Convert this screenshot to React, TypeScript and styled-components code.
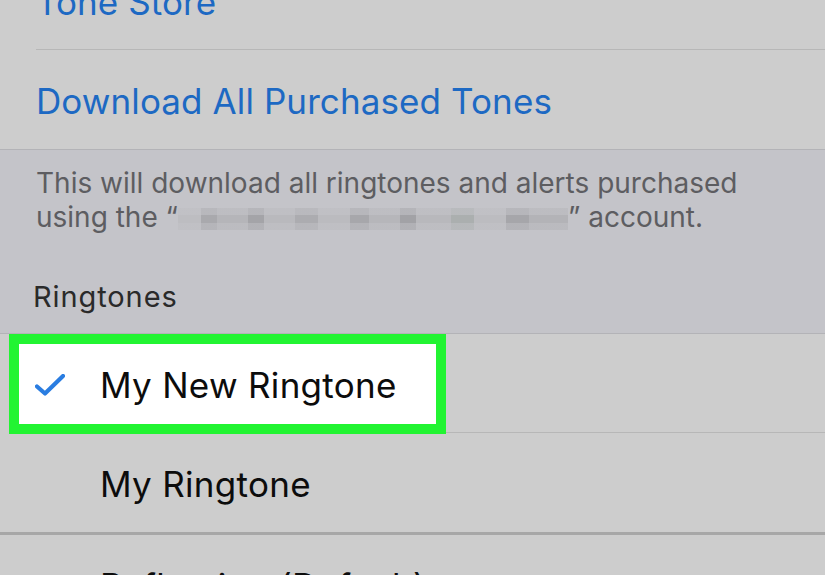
import React from "react";
import styled, { createGlobalStyle } from "styled-components";

const GlobalStyle = createGlobalStyle`
  html, body {
    margin: 0;
    padding: 0;
    background: #cdcdcd;
    overflow: hidden;
  }
  body {
    font-family: Inter, "Noto Sans", "Liberation Sans", sans-serif;
    -webkit-font-smoothing: antialiased;
  }
`;

const Page = styled.div`
  width: 825px;
  height: 575px;
  overflow: hidden;
  background: #cdcdcd;
`;

const List = styled.div`
  display: flex;
  flex-direction: column;
  margin-top: -49px;
`;

const Group = styled.div<{ $heavy?: boolean }>`
  display: flex;
  flex-direction: column;
  background: #cdcdcd;
  border-top: ${(p) => (p.$heavy ? "3px solid #a7a7a7" : "none")};
`;

const Row = styled.div<{ $last?: boolean; $inset?: number }>`
  position: relative;
  height: 99px;
  box-sizing: border-box;
  padding-top: 3px;
  display: flex;
  align-items: center;
  padding-left: ${(p) => p.$inset ?? 36}px;

  &::after {
    content: "";
    display: ${(p) => (p.$last ? "none" : "block")};
    position: absolute;
    left: ${(p) => p.$inset ?? 36}px;
    right: 0;
    bottom: 0;
    height: 1px;
    background: #b7b7b7;
  }
`;

const ActionLabel = styled.span`
  font-size: 35px;
  color: #1d69c3;
  letter-spacing: 0.1px;
`;

const ToneLabel = styled.span`
  position: relative;
  z-index: 2;
  font-size: 35px;
  color: #0c0c0c;
  letter-spacing: 0.3px;
`;

const SectionGap = styled.div`
  background: #c4c4c9;
  border-top: 1px solid #b3b3b7;
  border-bottom: 1px solid #b3b3b7;
  padding: 16px 36px 19px 36px;
  display: flex;
  flex-direction: column;
`;

const Footer = styled.p`
  margin: 0;
  font-size: 28px;
  line-height: 34px;
  color: #5d5d61;
  white-space: nowrap;
`;

const Redacted = styled.span`
  display: inline-block;
  width: 390px;
  height: 22px;
  vertical-align: -3px;
  background:
    linear-gradient(180deg, rgba(196,196,201,0.55) 0 30%, rgba(196,196,201,0) 30% 70%, rgba(196,196,201,0.45) 70% 100%),
    linear-gradient(90deg,
      #bdbdc1 0 6%, #a9a9ad 6% 10%, #b5b5b9 10% 18%, #a4a4a8 18% 22%,
      #b9b9bd 22% 30%, #acacb0 30% 36%, #bbbbbf 36% 44%, #a7a7ab 44% 49%,
      #b6b6ba 49% 57%, #a2a2a6 57% 61%, #b8b8bc 61% 70%, #abafaf 70% 76%,
      #bcbcc0 76% 84%, #a6a6aa 84% 90%, #b3b3b7 90% 100%);
`;

const Header = styled.h3`
  margin: 46px 0 0 -3px;
  font-size: 29px;
  font-weight: 400;
  line-height: 34px;
  letter-spacing: 0.9px;
  color: #2a2a2a;
`;

const Highlight = styled.div`
  position: absolute;
  left: 9px;
  top: 0;
  width: 437px;
  height: 100px;
  box-sizing: border-box;
  border: 10px solid #22f432;
  background: #ffffff;
  z-index: 1;
`;

const Check = styled.svg`
  position: absolute;
  left: 35px;
  top: 40px;
  z-index: 2;
`;

const CheckMark = () => (
  <Check width="30" height="22" viewBox="0 0 30 22">
    <path
      d="M2 12.5 L10 19.5 L28 2"
      fill="none"
      stroke="#2a7de1"
      strokeWidth="4.2"
      strokeLinecap="round"
      strokeLinejoin="round"
    />
  </Check>
);

export default function App() {
  return (
    <Page>
      <GlobalStyle />
      <List>
        <Group>
          <Row>
            <ActionLabel>Tone Store</ActionLabel>
          </Row>
          <Row $last>
            <ActionLabel>Download All Purchased Tones</ActionLabel>
          </Row>
        </Group>
        <SectionGap>
          <Footer>
            This will download all ringtones and alerts purchased
            <br />
            using the “<Redacted />” account.
          </Footer>
          <Header>Ringtones</Header>
        </SectionGap>
        <Group>
          <Row $inset={100}>
            <Highlight />
            <CheckMark />
            <ToneLabel>My New Ringtone</ToneLabel>
          </Row>
          <Row $inset={100} $last>
            <ToneLabel>My Ringtone</ToneLabel>
          </Row>
        </Group>
        <Group $heavy>
          <Row $inset={100}>
            <ToneLabel>Reflection (Default)</ToneLabel>
          </Row>
        </Group>
      </List>
    </Page>
  );
}
